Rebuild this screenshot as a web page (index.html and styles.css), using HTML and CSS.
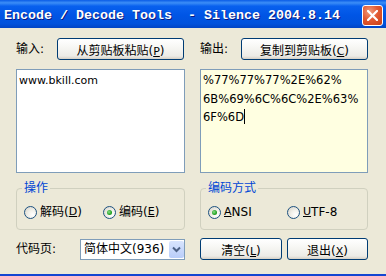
FILE: index.html
```html
<!DOCTYPE html>
<html lang="zh-CN">
<head>
    <meta charset="UTF-8">
    <title>Encode / Decode Tools</title>
    <link rel="stylesheet" href="styles.css">
</head>
<body>
    <div class="window">
        <div class="titlebar">
            <span class="title">Encode / Decode Tools  - Silence 2004.8.14</span>
            <span class="close">
                <svg width="11" height="11" viewBox="0 0 11 11">
                    <path d="M1 1 L10 10 M10 1 L1 10" stroke="#fff" stroke-width="2.2" stroke-linecap="square"/>
                </svg>
            </span>
        </div>

        <div class="client">
            <div class="col">
                <div class="row top-row">
                    <span class="label">输入:</span>
                    <button class="btn btn-wide">从剪贴板粘贴(<u>P</u>)</button>
                </div>
                <div class="edit">www.bkill.com</div>
                <fieldset class="group">
                    <legend>操作</legend>
                    <div class="radios">
                        <span class="radio-item"><span class="radio"></span>解码(<u>D</u>)</span>
                        <span class="radio-item"><span class="radio checked"></span>编码(<u>E</u>)</span>
                    </div>
                </fieldset>
                <div class="row bottom-row">
                    <span class="label label-wide">代码页:</span>
                    <div class="select">
                        <span class="select-text">简体中文(936)</span>
                        <span class="drop">
                            <svg width="9" height="7" viewBox="0 0 9 7">
                                <path d="M1 1.5 L4.5 5 L8 1.5" fill="none" stroke="#4D6185" stroke-width="2"/>
                            </svg>
                        </span>
                    </div>
                </div>
            </div>

            <div class="col">
                <div class="row top-row">
                    <span class="label">输出:</span>
                    <button class="btn btn-wide">复制到剪贴板(<u>C</u>)</button>
                </div>
                <div class="edit edit-out">%77%77%77%2E%62%<br>6B%69%6C%6C%2E%63%<br>6F%6D<span class="caret"></span></div>
                <fieldset class="group">
                    <legend>编码方式</legend>
                    <div class="radios">
                        <span class="radio-item"><span class="radio checked"></span><u>A</u>NSI</span>
                        <span class="radio-item"><span class="radio"></span><u>U</u>TF-8</span>
                    </div>
                </fieldset>
                <div class="row bottom-row">
                    <button class="btn btn-clear">清空(<u>L</u>)</button>
                    <button class="btn btn-exit">退出(<u>X</u>)</button>
                </div>
            </div>
        </div>
    </div>
</body>
</html>
```

FILE: styles.css
```css
body {
    margin: 0;
    font-family: "DejaVu Sans", "Noto Sans CJK SC", sans-serif;
    font-size: 11px;
    color: #000;
}
.window {
    width: 386px;
    height: 276px;
    display: flex;
    flex-direction: column;
}
.titlebar {
    height: 28px;
    display: flex;
    align-items: center;
    padding-left: 4px;
    background: linear-gradient(#0A5CE6 0%, #3C8EF7 10%, #0860EE 22%, #0055E5 55%, #0152DC 85%, #0144C4 100%);
}
.title {
    white-space: pre;
    font-family: "Liberation Mono", monospace;
    font-weight: bold;
    font-size: 13.33px;
    color: #fff;
    text-shadow: 1px 1px 0 #0A1A80;
    margin-top: 3px;
}
.close {
    margin-left: auto;
    margin-right: 3px;
    margin-top: 3px;
    width: 19px;
    height: 19px;
    border: 1px solid #fff;
    border-radius: 3px;
    background: radial-gradient(circle at 35% 30%, #F09C7E 0%, #E25A33 45%, #C83D14 100%);
    display: flex;
    align-items: center;
    justify-content: center;
}
.client {
    flex: 1;
    box-sizing: border-box;
    background: #ECE9D8;
    border-bottom: 2px solid #1446D2;
    padding: 10px 0 0 16px;
    display: grid;
    grid-template-columns: 169px 168px;
    column-gap: 15px;
    align-items: start;
}
.col {
    display: flex;
    flex-direction: column;
}
.row {
    display: flex;
    align-items: center;
    height: 22px;
}
.label {
    width: 41px;
    font-size: 12px;
    line-height: 14px;
}
.label-wide {
    width: 64px;
}
.btn {
    height: 22px;
    box-sizing: border-box;
    border: 1px solid #003C74;
    border-radius: 3px;
    background: linear-gradient(#FFFFFF 0%, #F7F7F4 40%, #ECEBE6 85%, #D6D0C5 100%);
    font-family: "DejaVu Sans", "Noto Sans CJK SC", sans-serif;
    font-size: 12px;
    padding: 0;
    color: #000;
}
.btn u {
    font-size: 11px;
}
.btn-wide {
    width: 127px;
}
.btn-clear {
    width: 82px;
}
.btn-exit {
    width: 81px;
    margin-left: 5px;
}
.edit {
    margin-top: 9px;
    height: 104px;
    box-sizing: border-box;
    border: 1px solid #7F9DB9;
    background: #fff;
    padding: 2px 2px 0 2px;
    line-height: 18.5px;
    font-size: 11px;
}
.edit-out {
    background: #FFFFE1;
    padding-top: 1px;
    font-size: 11.5px;
}
.caret {
    display: inline-block;
    width: 1px;
    height: 15px;
    background: #000;
    vertical-align: -3px;
}
.group {
    margin: 8px 0 0 0;
    padding: 0 0 0 7px;
    height: 49px;
    box-sizing: border-box;
    border: 1px solid #D0D0BF;
    border-radius: 4px;
    min-width: 0;
}
.group legend {
    padding: 0 2px;
    margin-left: -2px;
    color: #0046D5;
    font-size: 12px;
    line-height: 14px;
}
.radios {
    display: flex;
    margin-top: 10px;
}
.radio-item {
    display: flex;
    align-items: center;
    width: 79px;
    font-size: 12px;
    line-height: 14px;
}
.radio-item u {
    font-size: 11px;
}
.radio {
    width: 13px;
    height: 13px;
    box-sizing: border-box;
    border: 1px solid #1C5180;
    border-radius: 50%;
    background: radial-gradient(circle at 70% 70%, #FFFFFF 0%, #F2F1EB 40%, #D4D1C6 100%);
    margin-right: 3px;
    display: flex;
    align-items: center;
    justify-content: center;
}
.radio.checked::after {
    content: "";
    width: 5px;
    height: 5px;
    border-radius: 50%;
    background: radial-gradient(circle at 40% 40%, #8AE08A 0%, #21A121 60%, #1A8A1A 100%);
}
.bottom-row {
    margin-top: 8px;
}
.select {
    width: 105px;
    height: 21px;
    box-sizing: border-box;
    border: 1px solid #7F9DB9;
    background: #fff;
    padding: 1px 0 1px 3px;
    display: flex;
    align-items: center;
}
.select-text {
    flex: 1;
    font-size: 12px;
    line-height: 14px;
}
.drop {
    width: 15px;
    height: 17px;
    border-radius: 2px;
    background: linear-gradient(#D8E4FD, #B9CDF9);
    display: flex;
    align-items: center;
    justify-content: center;
}
```
